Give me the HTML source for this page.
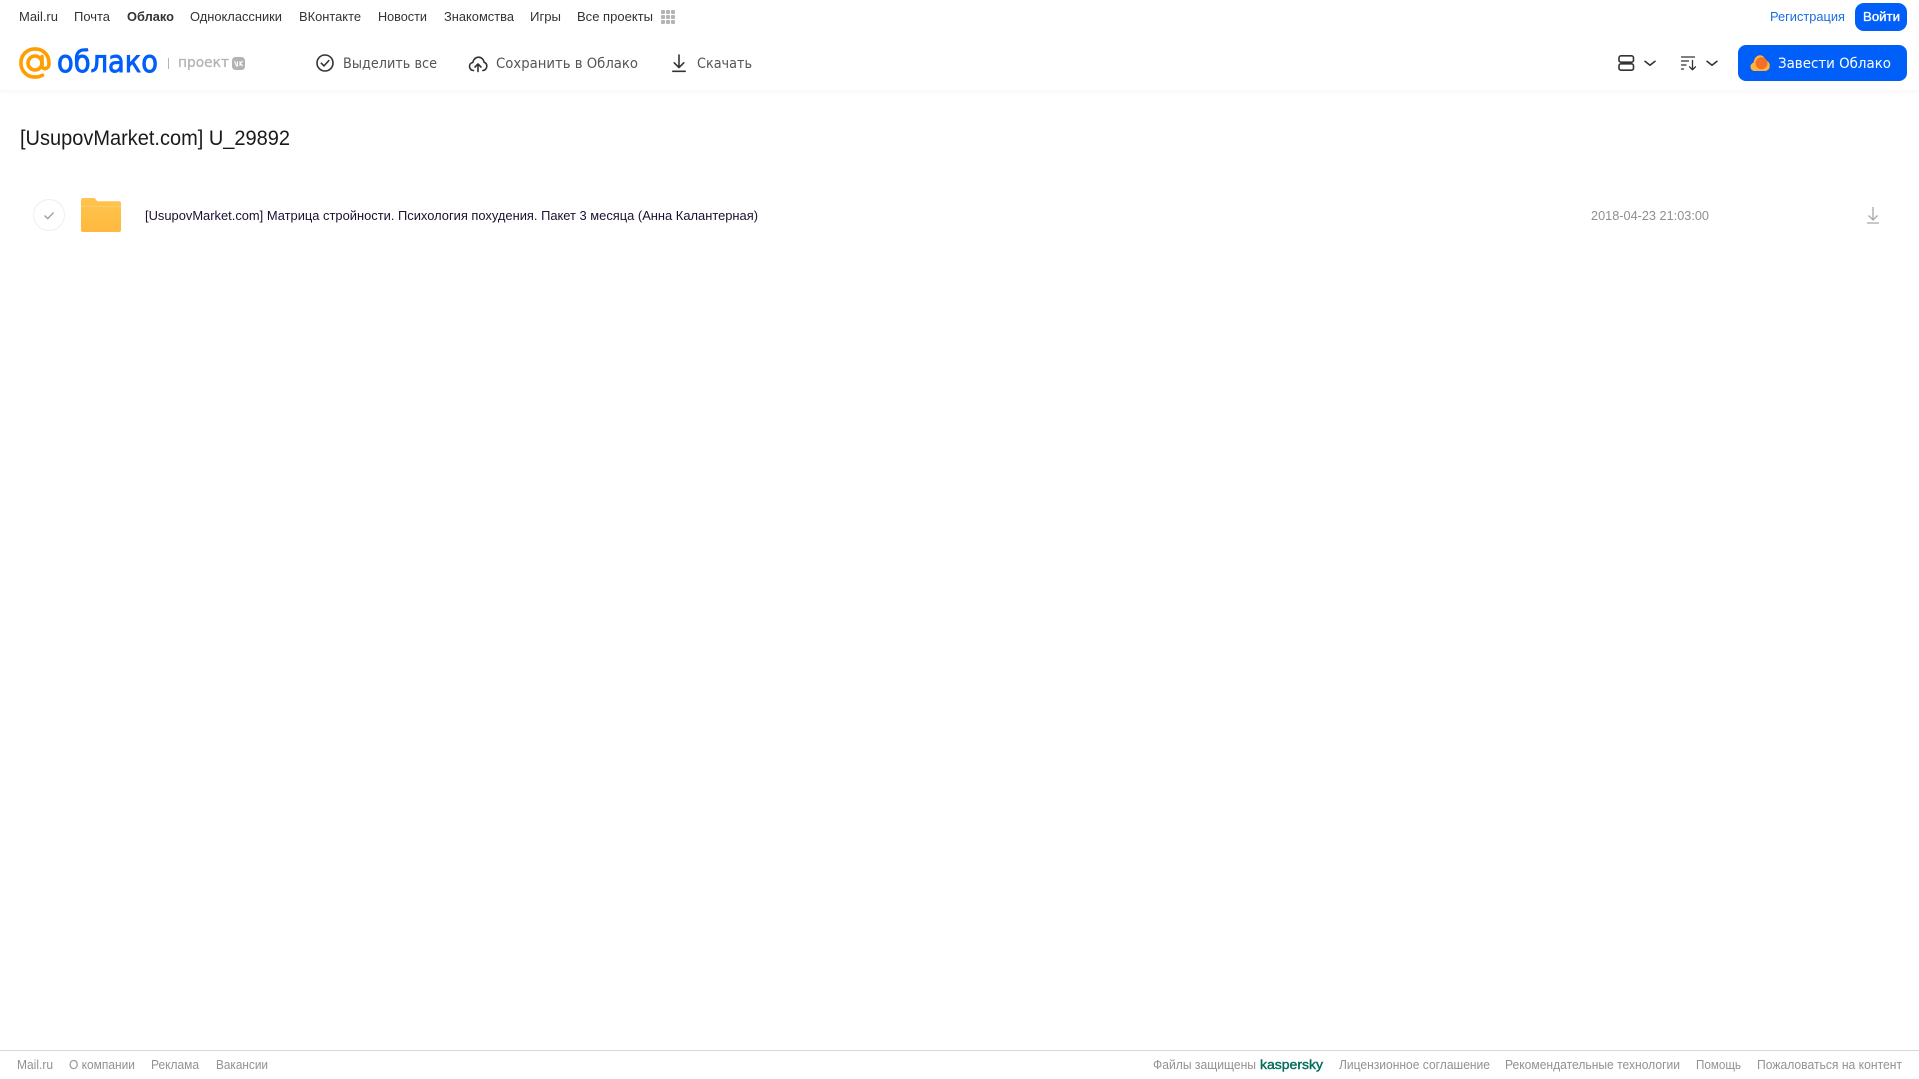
<!DOCTYPE html>
<html lang="ru"><head><meta charset="utf-8"><title>Облако</title>
<style>
html,body{margin:0;padding:0;background:#fff;width:1919px;height:1079px;overflow:hidden}
svg{display:block;position:absolute;left:0;top:0}
text{font-family:"Liberation Sans","DejaVu Sans",sans-serif}
.n{font-size:13px;fill:#333}
.t{font-size:14.5px;fill:#555;font-family:"DejaVu Sans","Liberation Sans",sans-serif}
.f{font-size:12.5px;fill:#929292}
.ic{fill:none;stroke:#333;stroke-width:1.6;stroke-linecap:round;stroke-linejoin:round}
</style></head><body>
<svg width="1919" height="1079" viewBox="0 0 1919 1079" xmlns="http://www.w3.org/2000/svg">
<defs><filter id="s" x="-5%" y="-100%" width="110%" height="300%"><feGaussianBlur stdDeviation="3"/></filter>
<linearGradient id="fg" x1="0" y1="0" x2="0" y2="1"><stop offset="0" stop-color="#ffc44f"/><stop offset="1" stop-color="#ffb93e"/></linearGradient></defs>
<rect x="0" y="85" width="1919" height="6" fill="#000" opacity=".05" filter="url(#s)"/>
<rect x="0" y="0" width="1919" height="90" fill="#fff"/>

<!-- top nav -->
<text class="n" x="19" y="21" textLength="39" lengthAdjust="spacingAndGlyphs">Mail.ru</text>
<text class="n" x="74" y="21" textLength="36" lengthAdjust="spacingAndGlyphs">Почта</text>
<text class="n" x="127" y="21" textLength="47" lengthAdjust="spacingAndGlyphs" font-weight="700">Облако</text>
<text class="n" x="190" y="21" textLength="92" lengthAdjust="spacingAndGlyphs">Одноклассники</text>
<text class="n" x="299" y="21" textLength="62" lengthAdjust="spacingAndGlyphs">ВКонтакте</text>
<text class="n" x="378" y="21" textLength="49" lengthAdjust="spacingAndGlyphs">Новости</text>
<text class="n" x="444" y="21" textLength="70" lengthAdjust="spacingAndGlyphs">Знакомства</text>
<text class="n" x="530" y="21" textLength="31" lengthAdjust="spacingAndGlyphs">Игры</text>
<text class="n" x="577" y="21" textLength="76" lengthAdjust="spacingAndGlyphs">Все проекты</text>
<g fill="#b4b4b4">
<rect x="661" y="10" width="4" height="4" rx="1"/><rect x="666" y="10" width="4" height="4" rx="1"/><rect x="671" y="10" width="4" height="4" rx="1"/>
<rect x="661" y="15" width="4" height="4" rx="1"/><rect x="666" y="15" width="4" height="4" rx="1"/><rect x="671" y="15" width="4" height="4" rx="1"/>
<rect x="661" y="20" width="4" height="4" rx="1"/><rect x="666" y="20" width="4" height="4" rx="1"/><rect x="671" y="20" width="4" height="4" rx="1"/>
</g>
<text x="1770" y="21" font-size="13" fill="#1a6fe0" textLength="75" lengthAdjust="spacingAndGlyphs">Регистрация</text>
<rect x="1855" y="3" width="52" height="28" rx="9" fill="#005ff9"/>
<text x="1863" y="21" font-size="13" fill="#fff" stroke="#fff" stroke-width=".35" textLength="37" lengthAdjust="spacingAndGlyphs">Войти</text>

<!-- logo -->
<g fill="none" stroke="#ff9e00" stroke-width="3.6" stroke-linecap="round">
<circle cx="35" cy="63" r="7"/>
<path d="M42 56.5V65.5C42 70 49 70 49 63.5C49 54.5 43 48.9 35 48.9C27 48.9 20.9 55 20.9 63C20.9 71 27 77.1 35 77.1C37.8 77.1 40.2 76.5 42.5 75.2"/>
</g>
<text x="57" y="72" font-size="30" fill="#005ff9" stroke="#005ff9" stroke-width=".9" textLength="101" lengthAdjust="spacingAndGlyphs" style="font-family:'DejaVu Sans',sans-serif">облако</text>
<rect x="168" y="58" width="1" height="11" fill="#b5b5b5"/>
<text x="178" y="67" font-size="14.5" fill="#b3b3b3" stroke="#b3b3b3" stroke-width=".3" textLength="51" lengthAdjust="spacingAndGlyphs" style="font-family:'DejaVu Sans',sans-serif">проект</text>
<rect x="232" y="57" width="13" height="13" rx="3.5" fill="#b3b3b3"/>
<path d="M234.5 61.2L236.5 66H237.4V61.2M242.8 61.2L240 63.6L243 66M240 61.2V66" fill="none" stroke="#fff" stroke-width="1.1"/>

<!-- toolbar -->
<g class="ic"><circle cx="325" cy="63" r="8"/><path d="M321.3 63.2L324 65.9L328.8 60.6"/></g>
<text class="t" x="343" y="68" textLength="94" lengthAdjust="spacingAndGlyphs">Выделить все</text>
<g class="ic"><path d="M473.5 70.5C470.8 70.5 469.5 68.3 469.5 66.4C469.5 64.3 470.9 62.8 472.8 62.5C473.3 59.6 475.6 57.2 478.5 57.2C481.5 57.2 483.7 59.5 484.1 62.3C485.8 62.8 486.8 64.3 486.8 66C486.8 68.4 485.2 70.5 482.8 70.5"/><path d="M478 71.5V64M475 67L478 64L481 67"/></g>
<text class="t" x="496" y="68" textLength="142" lengthAdjust="spacingAndGlyphs">Сохранить в Облако</text>
<g class="ic"><path d="M679 55V67.5M674.2 62.8L679 67.6L683.8 62.8M672.8 71.3H685.2"/></g>
<text class="t" x="697" y="68" textLength="55" lengthAdjust="spacingAndGlyphs">Скачать</text>

<!-- right tools -->
<g class="ic"><rect x="1619" y="55.8" width="14.5" height="6.4" rx="2"/><rect x="1619" y="63.8" width="14.5" height="6.4" rx="2"/>
<path d="M1645 61.3L1650 65.3L1655 61.3"/>
<path d="M1681.5 57H1694.5M1681.5 61H1688.5M1681.5 65H1686M1681.5 69H1683.5M1692.5 60.5V69.5M1689.5 66.8L1692.5 69.8L1695.5 66.8" stroke-width="1.3"/>
<path d="M1707 61.3L1712 65.3L1717 61.3"/></g>
<rect x="1738" y="45" width="169" height="36" rx="8" fill="#005ff9"/>
<path d="M1755 71C1752 71 1750.5 68.9 1750.5 66.7C1750.5 64.7 1751.8 63 1753.6 62.6C1754 59 1756.3 55.3 1760 55.3C1762.8 55.3 1764.8 57.3 1765.2 60.3C1768 60.8 1769.8 63 1769.8 65.8C1769.8 68.8 1767.8 71 1765 71Z" fill="#ffb43a"/>
<circle cx="1761.5" cy="63.2" r="6" fill="#f4702a"/>
<text x="1778" y="68" font-size="14.5" fill="#fff" textLength="113" lengthAdjust="spacingAndGlyphs" style="font-family:'DejaVu Sans',sans-serif">Завести Облако</text>

<!-- title -->
<text x="20" y="145" font-size="21.5" fill="#1a1a1a" textLength="270" lengthAdjust="spacingAndGlyphs">[UsupovMarket.com] U_29892</text>

<!-- row -->
<circle cx="49" cy="215" r="15.5" fill="#fff" stroke="#efefef" stroke-width="1"/>
<path d="M44.5 215.5L47.8 218.6L53.5 212.5" fill="none" stroke="#a0a0a0" stroke-width="1.4"/>
<path d="M83 198H93C95 198 95.5 199 96.5 200.3C97 201 97.6 201.3 98.5 201.3H119C120.2 201.3 121 202.1 121 203.3V230C121 231.2 120.2 232 119 232H83C81.8 232 81 231.2 81 230V200C81 198.8 81.8 198 83 198Z" fill="url(#fg)"/>
<rect x="81" y="206" width="40" height="1" fill="#ffd27a" opacity=".6"/>
<text x="145" y="220" font-size="13" fill="#1c1030" textLength="613" lengthAdjust="spacingAndGlyphs">[UsupovMarket.com] Матрица стройности. Психология похудения. Пакет 3 месяца (Анна Калантерная)</text>
<text x="1591" y="220" font-size="13" fill="#8f8f8f" textLength="118" lengthAdjust="spacingAndGlyphs">2018-04-23 21:03:00</text>
<path d="M1873 207V220M1868.5 215.5L1873 220L1877.5 215.5M1867 223H1879" fill="none" stroke="#a8a8a8" stroke-width="1.3"/>

<!-- footer -->
<rect x="0" y="1050" width="1919" height="1" fill="#d9d9d9"/>
<text class="f" x="17" y="1069" textLength="36" lengthAdjust="spacingAndGlyphs">Mail.ru</text>
<text class="f" x="69" y="1069" textLength="66" lengthAdjust="spacingAndGlyphs">О компании</text>
<text class="f" x="151" y="1069" textLength="48" lengthAdjust="spacingAndGlyphs">Реклама</text>
<text class="f" x="216" y="1069" textLength="52" lengthAdjust="spacingAndGlyphs">Вакансии</text>
<text class="f" x="1153" y="1069" textLength="103" lengthAdjust="spacingAndGlyphs">Файлы защищены</text>
<text x="1260" y="1069" font-size="13" fill="#006d5c" stroke="#006d5c" stroke-width=".4" textLength="63" lengthAdjust="spacingAndGlyphs">kaspersky</text>
<text class="f" x="1339" y="1069" textLength="151" lengthAdjust="spacingAndGlyphs">Лицензионное соглашение</text>
<text class="f" x="1505" y="1069" textLength="175" lengthAdjust="spacingAndGlyphs">Рекомендательные технологии</text>
<text class="f" x="1696" y="1069" textLength="45" lengthAdjust="spacingAndGlyphs">Помощь</text>
<text class="f" x="1757" y="1069" textLength="145" lengthAdjust="spacingAndGlyphs">Пожаловаться на контент</text>
</svg>
</body></html>
